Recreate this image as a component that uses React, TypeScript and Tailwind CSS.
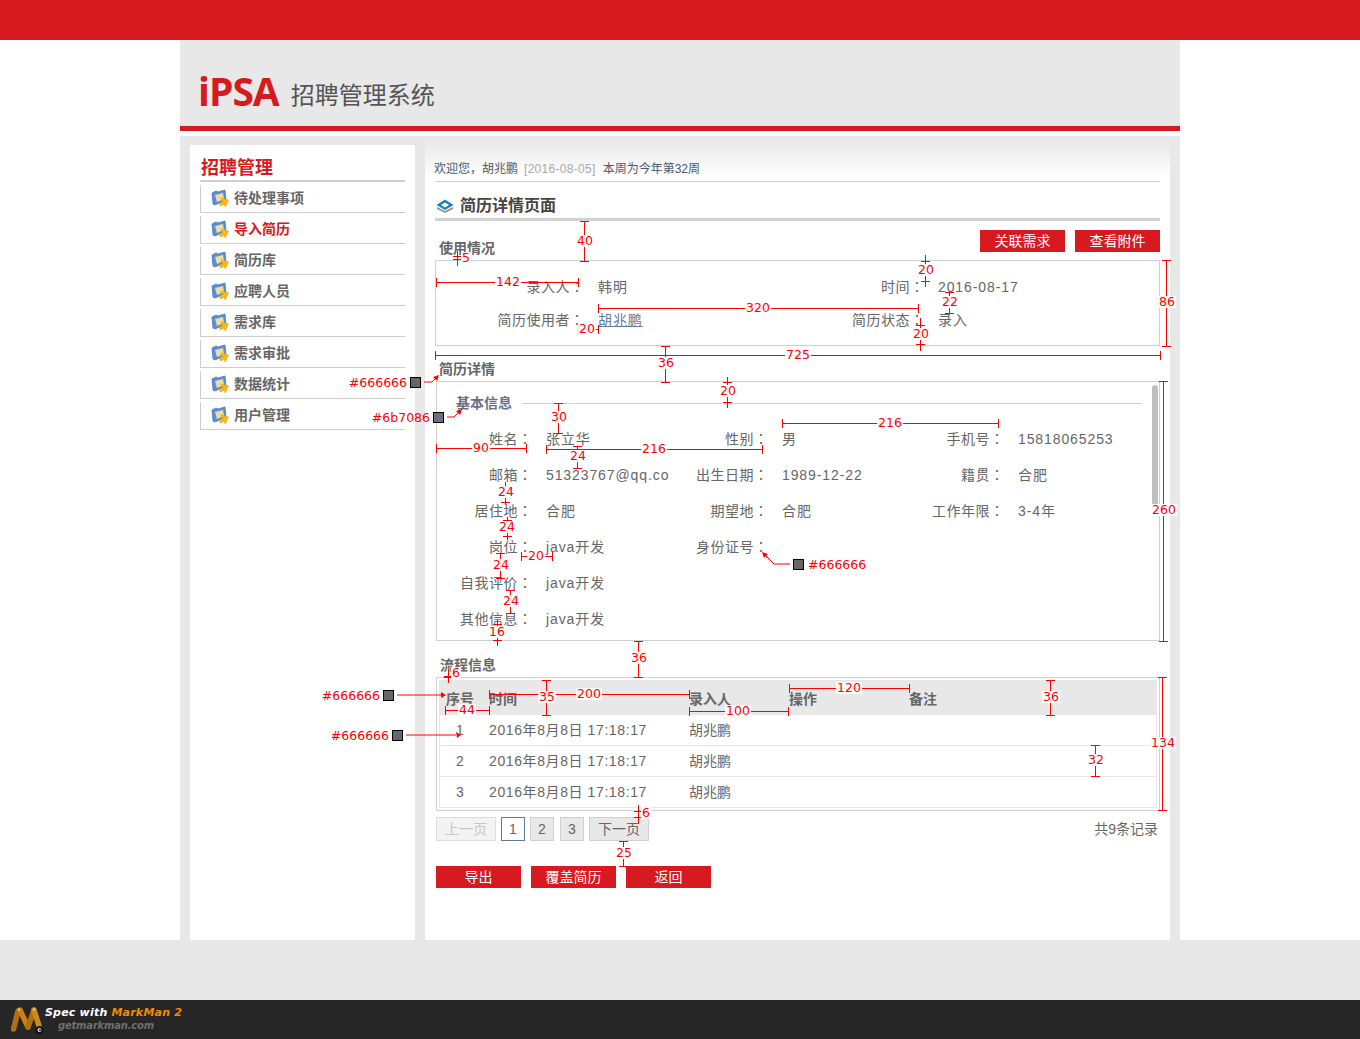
import React from "react";

const RED = "#ff0000";
type H = { x1: number; x2: number; y: number; t: string; lx: number };
type V = { x: number; y1: number; y2: number; c1?: number; c2?: number; t: string; ly: number; lx?: number };

const hs: H[] = [
  { x1: 436, x2: 578, y: 282, t: "142", lx: 508 },
  { x1: 598, x2: 918, y: 308, t: "320", lx: 758 },
  { x1: 578, x2: 598, y: 329, t: "20", lx: 587 },
  { x1: 435, x2: 1160, y: 355, t: "725", lx: 798 },
  { x1: 436, x2: 526, y: 448, t: "90", lx: 481 },
  { x1: 546, x2: 762, y: 449, t: "216", lx: 654 },
  { x1: 782, x2: 998, y: 423, t: "216", lx: 890 },
  { x1: 521, x2: 552, y: 556, t: "20", lx: 536 },
  { x1: 445, x2: 489, y: 710, t: "44", lx: 467 },
  { x1: 489, x2: 689, y: 694, t: "200", lx: 589 },
  { x1: 689, x2: 788, y: 711, t: "100", lx: 738 },
  { x1: 789, x2: 909, y: 688, t: "120", lx: 849 },
];
const vs: V[] = [
  { x: 584, y1: 221, y2: 261, t: "40", ly: 241, lx: 585 },
  { x: 457, y1: 251, y2: 266, c1: 256, c2: 259, t: "5", ly: 258, lx: 466 },
  { x: 925, y1: 255, y2: 287, c1: 261, c2: 281, t: "20", ly: 270, lx: 926 },
  { x: 949, y1: 292, y2: 313, t: "22", ly: 302, lx: 950 },
  { x: 920, y1: 318, y2: 351, c1: 325, c2: 344, t: "20", ly: 334, lx: 921 },
  { x: 1166, y1: 260, y2: 346, t: "86", ly: 302, lx: 1167 },
  { x: 665, y1: 346, y2: 382, t: "36", ly: 363, lx: 666 },
  { x: 727, y1: 377, y2: 408, c1: 382, c2: 402, t: "20", ly: 391, lx: 728 },
  { x: 558, y1: 403, y2: 433, t: "30", ly: 417, lx: 559 },
  { x: 577, y1: 446, y2: 468, t: "24", ly: 456, lx: 578 },
  { x: 505, y1: 482, y2: 505, c1: 486, c2: 502, t: "24", ly: 492, lx: 506 },
  { x: 507, y1: 517, y2: 540, c1: 520, c2: 536, t: "24", ly: 527 },
  { x: 500, y1: 553, y2: 578, t: "24", ly: 565, lx: 501 },
  { x: 510, y1: 590, y2: 613, t: "24", ly: 601, lx: 511 },
  { x: 497, y1: 620, y2: 646, c1: 624, c2: 640, t: "16", ly: 632 },
  { x: 638, y1: 641, y2: 677, t: "36", ly: 658, lx: 639 },
  { x: 1163, y1: 381, y2: 641, t: "260", ly: 510, lx: 1164 },
  { x: 1162, y1: 677, y2: 810, t: "134", ly: 743, lx: 1163 },
  { x: 448, y1: 670, y2: 683, c1: 676, c2: 677, t: "6", ly: 673, lx: 456 },
  { x: 546, y1: 680, y2: 715, t: "35", ly: 697, lx: 547 },
  { x: 1050, y1: 680, y2: 715, t: "36", ly: 697, lx: 1051 },
  { x: 1095, y1: 745, y2: 776, t: "32", ly: 760, lx: 1096 },
  { x: 638, y1: 805, y2: 823, c1: 811, c2: 817, t: "6", ly: 813, lx: 646 },
  { x: 623, y1: 841, y2: 866, t: "25", ly: 853, lx: 624 },
];
const chips = [
  { x: 410, y: 377, c: "#666666", side: "l", d: "M424 382 L432 382 L437 377", tip: "M439 375 L433 377 L437 381 Z" },
  { x: 433, y: 412, c: "#6b7086", side: "l", d: "M447 417 L454 417 L460 411", tip: "M462 409 L456 411 L460 415 Z" },
  { x: 793, y: 559, c: "#666666", side: "r", d: "M790 564 L774 564 L765 555", tip: "M762 552 L768 554 L764 558 Z" },
  { x: 383, y: 690, c: "#666666", side: "l", d: "M397 695 L441 695", tip: "M446 695 L441 692 L441 698 Z" },
  { x: 392, y: 730, c: "#666666", side: "l", d: "M406 735 L456 735", tip: "M461 735 L456 732 L457 738 Z" },
];

function Overlay() {
  const label = (t: string, x: number, y: number, key: string) => (
    <span
      key={key}
      className="absolute -translate-x-1/2 -translate-y-1/2 whitespace-nowrap bg-white/90 px-px text-[12.5px] leading-[12px] text-[#ff0000] font-['DejaVu_Sans',sans-serif]"
      style={{ left: x, top: y }}
    >
      {t}
    </span>
  );
  return (
    <div className="absolute inset-0 pointer-events-none">
      <svg className="absolute inset-0" width={1360} height={1039} shapeRendering="crispEdges">
        {hs.map((h, i) => (
          <path key={i} stroke={RED} d={`M${h.x1} ${h.y + 0.5}H${h.x2}M${h.x1 + 0.5} ${h.y - 4}V${h.y + 5}M${h.x2 + 0.5} ${h.y - 4}V${h.y + 5}`} fill="none" />
        ))}
        {vs.map((v, i) => {
          const c1 = v.c1 ?? v.y1;
          const c2 = v.c2 ?? v.y2;
          return (
            <path
              key={i}
              stroke={RED}
              fill="none"
              d={`M${v.x + 0.5} ${v.y1}V${v.y2}M${v.x - 4} ${c1 + 0.5}H${v.x + 5}M${v.x - 4} ${c2 + 0.5}H${v.x + 5}`}
            />
          );
        })}
      </svg>
      <svg className="absolute inset-0" width={1360} height={1039}>
        {chips.map((c, i) => (
          <g key={i}>
            <rect x={c.x + 0.5} y={c.y + 0.5} width={10} height={10} fill={c.c} stroke="#000" />
            <path d={c.d} stroke={RED} fill="none" />
            <path d={c.tip} fill={RED} />
          </g>
        ))}
      </svg>
      {hs.map((h, i) => label(h.t, h.lx, h.y, "h" + i))}
      {vs.map((v, i) => label(v.t, v.lx ?? v.x, v.ly, "v" + i))}
      {chips.map((c, i) => (
        <span
          key={i}
          className="absolute -translate-y-1/2 whitespace-nowrap text-[12.5px] leading-none text-[#ff0000] font-['DejaVu_Sans',sans-serif]"
          style={c.side === "l" ? { right: 1360 - c.x + 3, top: c.y + 6 } : { left: c.x + 15, top: c.y + 6 }}
        >
          {c.c}
        </span>
      ))}
    </div>
  );
}

function FolderIcon() {
  return (
    <svg width="20" height="20" viewBox="0 0 20 20" className="shrink-0 -translate-y-px">
      <path d="M2 5 L6 3 L8 4 L15 2 L16 12 L5 17 L3 16 Z" fill="#5b8fd8" stroke="#3f6fb8" strokeWidth="0.7" />
      <path d="M5 7 L13 5 L14 11 L7 14 Z" fill="#f0dc9c" />
      <path d="M9 13 L13 13 L13 9 L19 14 L13 19 L13 16 L9 16 Z" fill="#f9b90e" stroke="#eea208" strokeWidth="0.5" transform="rotate(-25 14 14)" />
    </svg>
  );
}

function TitleIcon() {
  return (
    <svg width="18" height="14" viewBox="0 0 18 14" className="shrink-0">
      <path d="M1 8 L9 12 L17 8 L17 10 L9 14 L1 10 Z" fill="#8a949c" />
      <path d="M0.5 6 L9 0.5 L17.5 6 L9 11 Z" fill="#1d80c4" />
      <path d="M5 6 L9 3.5 L13 6 L9 8.5 Z" fill="#fff" />
    </svg>
  );
}

function MLogo() {
  return (
    <svg width="34" height="30" viewBox="0 0 34 30">
      <path d="M7 6 L2.5 24" stroke="#b06f12" strokeWidth="5.5" strokeLinecap="round" />
      <path d="M9 5 L17 22" stroke="#c98219" strokeWidth="5.5" strokeLinecap="round" />
      <path d="M17 22 L23 5" stroke="#b06f12" strokeWidth="5.5" strokeLinecap="round" />
      <path d="M23 5 L29 24" stroke="#d08a1c" strokeWidth="5.5" strokeLinecap="round" />
      <circle cx="8" cy="4.5" r="1" fill="#ffe6a8" />
      <circle cx="23" cy="4.5" r="1" fill="#ffe6a8" />
      <circle cx="28.5" cy="25" r="4" fill="#111" />
      <circle cx="28.5" cy="25" r="2" fill="#ddd" />
      <circle cx="29" cy="25" r="1" fill="#222" />
    </svg>
  );
}

const menu = ["待处理事项", "导入简历", "简历库", "应聘人员", "需求库", "需求审批", "数据统计", "用户管理"];

function Sidebar() {
  return (
    <aside className="mt-[9px] w-[225px] bg-white px-[10px]">
      <h2 className="ml-px mt-[13px] text-[18px] font-bold leading-5 text-[#d71920]">招聘管理</h2>
      <div className="mt-[2px] h-[2px] bg-[#cfcfcf]" />
      {menu.map((m, i) => (
        <div key={m} className="mt-[3px] flex h-[28px] items-center gap-[4px] border-b border-l border-[#cccccc] pl-[9px]">
          <FolderIcon />
          <span className={`text-[14px] font-bold ${i === 1 ? "text-[#d71920]" : "text-[#666666]"}`}>{m}</span>
        </div>
      ))}
    </aside>
  );
}

const latin = "tracking-[0.9px]";

function Colon() {
  return <span className="font-['Noto_Sans_CJK_TC',sans-serif] tracking-normal">：</span>;
}

function Field({ label, value, link, labelW = "w-[95px]", valueW = "w-[127px]" }: { label: string; value: string; link?: boolean; labelW?: string; valueW?: string }) {
  return (
    <div className="flex -translate-y-px">
      <div className={`${labelW} shrink-0 whitespace-nowrap text-right tracking-[0.5px]`}>
        {label}
        <Colon />
      </div>
      <div className={`ml-[14px] ${valueW} shrink-0 translate-y-px whitespace-nowrap ${latin} ${link ? "text-[#5f7a9b] underline" : ""}`}>{value}</div>
    </div>
  );
}

const rows: [string, string][][] = [
  [["姓名", "张立华"], ["性别", "男"], ["手机号", "15818065253"]],
  [["邮箱", "51323767@qq.co"], ["出生日期", "1989-12-22"], ["籍贯", "合肥"]],
  [["居住地", "合肥"], ["期望地", "合肥"], ["工作年限", "3-4年"]],
  [["岗位", "java开发"], ["身份证号", ""]],
  [["自我评价", "java开发"]],
  [["其他信息", "java开发"]],
];

function RedBtn({ children }: { children: React.ReactNode }) {
  return <button className="flex h-[22px] w-[85px] items-center justify-center bg-[#d71920] text-[14px] text-white">{children}</button>;
}

function PageBtn({ children, cls }: { children: React.ReactNode; cls: string }) {
  return <button className={`flex h-[24px] items-center justify-center border text-[14px] ${cls}`}>{children}</button>;
}

function Main() {
  return (
    <main className="w-[745px] bg-white bg-[linear-gradient(#e6e6e6,#ffffff_42px)] px-[10px] text-[14px] text-[#666666]">
      <div className="flex h-[46px] border-b border-[#d0d0d0] pt-[23px] text-[12px] leading-5 text-[#4a5a6a]">
        <span className="-ml-px">欢迎您，胡兆鹏</span>
        <span className="ml-[6px] tracking-[0.3px] text-[#aaaaaa]">[2016-08-05]</span>
        <span className="ml-[7px]">本周为今年第32周</span>
      </div>
      <div className="flex h-[36px] items-start gap-[6px] pt-[14px]">
        <div className="ml-px mt-[3px]"><TitleIcon /></div>
        <h1 className="text-[16px] font-bold leading-5 text-[#444444]">简历详情页面</h1>
      </div>
      <div className="h-[3px] bg-[#d2d2d2]" />
      <div className="flex h-[39px] justify-between">
        <h3 className="ml-[4px] mt-[17px] font-bold leading-5">使用情况</h3>
        <div className="mt-[9px] flex gap-[10px]">
          <RedBtn>关联需求</RedBtn>
          <RedBtn>查看附件</RedBtn>
        </div>
      </div>
      <div className="h-[86px] border border-[#cfcfcf] pt-[10px]">
        <div className="flex h-[33px] items-center">
          <Field label="录入人" value="韩明" labelW="w-[148px]" valueW="w-[226px]" />
          <Field label="时间" value="2016-08-17" labelW="w-[100px]" valueW="w-[100px]" />
        </div>
        <div className="flex h-[33px] items-center">
          <Field label="简历使用者" value="胡兆鹏" link labelW="w-[148px]" valueW="w-[226px]" />
          <Field label="简历状态" value="录入" labelW="w-[100px]" valueW="w-[100px]" />
        </div>
      </div>
      <h3 className="ml-[4px] h-[35px] pt-[13px] font-bold leading-5">简历详情</h3>
      <div className="relative ml-px h-[260px] border border-[#cfcfcf]">
        <div className="ml-[19px] mr-[17px] mt-[11px] flex h-[20px] items-center gap-[10px]">
          <h4 className="font-bold text-[#6b7086]">基本信息</h4>
          <div className="h-px flex-1 bg-[#d0d0d0]" />
        </div>
        <div className="mt-[9px]">
          {rows.map((r, i) => (
            <div key={i} className="flex h-[36px] items-center">
              {r.map(([l, v]) => (
                <Field key={l} label={l} value={v} />
              ))}
            </div>
          ))}
        </div>
        <div className="absolute right-[1px] top-[3px] h-[120px] w-[6px] rounded-[3px] bg-[#bfbfbf]" />
      </div>
      <h3 className="ml-[5px] h-[36px] pt-[14px] font-bold leading-5">流程信息</h3>
      <div className="ml-px h-[134px] border border-[#cfcfcf] p-[2px]">
        <div className="h-full border-x border-b border-[#e6e6e6]">
          <div className="grid h-[35px] grid-cols-[49px_200px_100px_120px_1fr] items-center bg-[#e8e8e8] pt-[4px] font-bold">
            <div className="pl-[6px]">序号</div>
            <div>时间</div>
            <div>录入人</div>
            <div>操作</div>
            <div>备注</div>
          </div>
          {[1, 2, 3].map((n) => (
            <div key={n} className="grid h-[31px] grid-cols-[49px_200px_100px_120px_1fr] items-center border-b border-[#e6e6e6] last:border-b-0">
              <div className="pl-[16px]">{n}</div>
              <div className="whitespace-nowrap tracking-[0.6px]">2016年8月8日 17:18:17</div>
              <div>胡兆鹏</div>
              <div />
              <div />
            </div>
          ))}
        </div>
      </div>
      <div className="ml-px mt-[6px] flex items-center justify-between pr-[2px]">
        <div className="flex gap-[5px]">
          <PageBtn cls="w-[60px] border-[#dddddd] bg-[#f3f3f3] text-[#c8c8c8]">上一页</PageBtn>
          <PageBtn cls="w-[24px] border-[#5f7a9b] bg-white">1</PageBtn>
          <PageBtn cls="w-[24px] border-[#d0d0d0] bg-[#e8e8e8]">2</PageBtn>
          <PageBtn cls="ml-px w-[24px] border-[#d0d0d0] bg-[#e8e8e8]">3</PageBtn>
          <PageBtn cls="w-[60px] border-[#d0d0d0] bg-[#e8e8e8]">下一页</PageBtn>
        </div>
        <span>共9条记录</span>
      </div>
      <div className="ml-px mt-[25px] flex gap-[10px]">
        <RedBtn>导出</RedBtn>
        <RedBtn>覆盖简历</RedBtn>
        <RedBtn>返回</RedBtn>
      </div>
    </main>
  );
}

export default function App() {
  return (
    <div className="relative flex h-[1039px] w-full flex-col overflow-hidden bg-white font-['Liberation_Sans','Noto_Sans_CJK_SC',sans-serif]">
      <div className="h-[40px] bg-[#d71920]" />
      <div className="mx-auto flex h-[900px] w-[1000px] flex-col bg-[#e8e8e8]">
        <header className="flex h-[86px] items-end pb-[12px] pl-[18px]">
          <span className="font-['Open_Sans',sans-serif] text-[39px] font-bold leading-[46px] tracking-[-1px] text-[#d71920]">iPSA</span>
          <span className="mb-[2px] ml-[12px] text-[24px] font-normal leading-[36px] text-[#555555] font-['Noto_Sans_CJK_SC',sans-serif]">招聘管理系统</span>
        </header>
        <div className="h-[5px] bg-[#d71920]" />
        <div className="h-[5px] bg-white" />
        <div className="flex flex-1 gap-[10px] px-[10px]">
          <Sidebar />
          <Main />
        </div>
      </div>
      <div className="h-[60px] bg-[#e8e8e8]" />
      <footer className="flex h-[39px] items-center bg-[#262626] pl-[11px]">
        <MLogo />
        <div className="-mt-[2px] font-['DejaVu_Sans',sans-serif] font-bold italic">
          <div className="text-[11px] leading-[14px] tracking-[0.2px] text-white">
            Spec with <span className="text-[#f08c00]">MarkMan 2</span>
          </div>
          <div className="ml-[13px] text-[10px] leading-[12px] tracking-[-0.2px] text-[#6f6f6f]">getmarkman.com</div>
        </div>
      </footer>
      <Overlay />
    </div>
  );
}
